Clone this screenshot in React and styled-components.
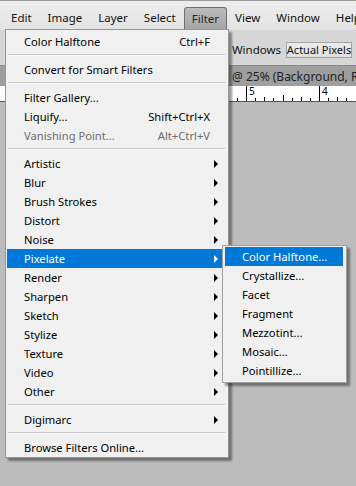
import React from 'react';
import styled, { createGlobalStyle, css } from 'styled-components';

const Global = createGlobalStyle`
  html, body { margin: 0; padding: 0; }
  body {
    width: 356px; height: 486px; overflow: hidden; background: #bcbcbc;
    font-family: "Segoe UI", "Noto Sans", sans-serif;
  }
`;

const Screen = styled.div`
  position: relative;
  width: 356px;
  height: 486px;
  overflow: hidden;
  background: #bcbcbc;
  display: flex;
  flex-direction: column;
  font-family: "Segoe UI", "Noto Sans", sans-serif;
`;

const MenuBar = styled.div`
  height: 30px;
  box-sizing: border-box;
  border-top: 1px solid #9c9c9c;
  background: linear-gradient(#ededed, #e3e3e3);
  display: flex;
  align-items: flex-end;
  padding-left: 3px;
  white-space: nowrap;
  overflow: hidden;
`;

const MenuTitle = styled.div`
  height: 23px;
  box-sizing: border-box;
  padding: 0 8px 2px;
  display: flex;
  align-items: center;
  font-size: 11.5px;
  color: #111;
  white-space: nowrap;
  flex: none;
  ${p => p.$active && css`
    background: linear-gradient(#bdbdbd, #a3a3a3);
    border: 1px solid #6f6f6f;
    border-bottom: none;
    border-radius: 3px 3px 0 0;
    padding: 0 7px 2px;
    color: #2a1f2a;
  `}
`;

const OptionsBar = styled.div`
  height: 35px;
  box-sizing: border-box;
  background: #d6d6d6;
  display: flex;
  align-items: center;
  justify-content: flex-end;
  gap: 5px;
  padding: 4px 4px 0 0;
  font-size: 11.5px;
  color: #111;
`;

const OptionLabel = styled.span`
  white-space: nowrap;
`;

const OptionButton = styled.div`
  height: 16px;
  width: 66px;
  box-sizing: border-box;
  border: 1px solid #a4a4a4;
  background: linear-gradient(#ececec, #e0e0e0);
  display: flex;
  align-items: center;
  justify-content: center;
  white-space: nowrap;
  font-size: 11px;
`;

const DocBand = styled.div`
  height: 21px;
  box-sizing: border-box;
  background: #9e9e9e;
  border-top: 1px solid #8a8a8a;
  display: flex;
  align-items: center;
  font-size: 12px;
  color: #222;
  white-space: nowrap;
  overflow: hidden;
`;

const DocPrefix = styled.span`
  width: 232px;
  flex: none;
  display: flex;
  justify-content: flex-end;
  overflow: hidden;
`;

const Ruler = styled.div`
  height: 15px;
  background: #fff;
  border-bottom: 1px solid #555;
  flex: none;
`;

const Workspace = styled.div`
  flex: 1;
  background: #bcbcbc;
`;

const Menu = styled.div`
  position: absolute;
  left: 5px;
  top: 29px;
  width: 224px;
  box-sizing: border-box;
  background: #f0f0f0;
  border: 1px solid #979797;
  box-shadow: 3px 3px 2px rgba(0, 0, 0, 0.4);
  padding: 2px 0 0;
  z-index: 2;
`;

const SubMenu = styled(Menu)`
  left: 222px;
  top: 245px;
  width: 125px;
  padding: 1px 3px 2px 2px;
  border-color: #a0a0a0;
  z-index: 3;
`;

const Row = styled.div`
  height: 19px;
  margin: 0 5px 0 1px;
  padding-left: 17px;
  display: flex;
  align-items: center;
  font-size: 11.2px;
  line-height: 19px;
  color: ${p => (p.$disabled ? '#6d6d6d' : '#000')};
  white-space: nowrap;
  ${p => p.$active && css`
    background: #0078d7;
    color: #fff;
  `}
`;

const SubRow = styled(Row)`
  margin: 0;
`;

const Label = styled.span`
  flex: 1;
`;

const Shortcut = styled.span``;

const Trail = styled.span`
  width: 13px;
  flex: none;
  display: flex;
  align-items: center;
`;

const Arrow = styled.span`
  margin-left: 4px;
  width: 0;
  height: 0;
  border-left: 4px solid currentColor;
  border-top: 4px solid transparent;
  border-bottom: 4px solid transparent;
`;

const Separator = styled.div`
  height: 9px;
  margin: 0 3px 0 2px;
  display: flex;
  flex-direction: column;
  &::before {
    content: '';
    margin-top: 3px;
    height: 1px;
    background: #c6c6c6;
  }
  &::after {
    content: '';
    height: 1px;
    background: #fafafa;
  }
`;

const menuItems = [
  { label: 'Color Halftone', shortcut: 'Ctrl+F' },
  { sep: true },
  { label: 'Convert for Smart Filters' },
  { sep: true },
  { label: 'Filter Gallery...' },
  { label: 'Liquify...', shortcut: 'Shift+Ctrl+X' },
  { label: 'Vanishing Point...', shortcut: 'Alt+Ctrl+V', disabled: true },
  { sep: true },
  ...['Artistic', 'Blur', 'Brush Strokes', 'Distort', 'Noise', 'Pixelate', 'Render', 'Sharpen', 'Sketch', 'Stylize', 'Texture', 'Video', 'Other'].map(l => ({ label: l, sub: true, active: l === 'Pixelate' })),
  { sep: true },
  { label: 'Digimarc', sub: true },
  { sep: true },
  { label: 'Browse Filters Online...' },
];

const subItems = ['Color Halftone...', 'Crystallize...', 'Facet', 'Fragment', 'Mezzotint...', 'Mosaic...', 'Pointillize...'];

const titles = ['Edit', 'Image', 'Layer', 'Select', 'Filter', 'View', 'Window', 'Help'];

function RulerTicks() {
  const ticks = [];
  const step = 73 / 8;
  for (let i = -27; i <= 12; i++) {
    const x = 246 + i * step;
    if (x < 0 || x > 356) continue;
    const m = ((i % 8) + 8) % 8;
    let h = 3;
    if (m === 0) h = 15;
    else if (m === 4) h = 6;
    else if (m % 2 === 0) h = 4;
    ticks.push(<line key={i} x1={Math.round(x) + 0.5} x2={Math.round(x) + 0.5} y1={15 - h} y2={15} stroke="#000" strokeWidth="1" />);
  }
  return (
    <svg width="356" height="15" style={{ display: 'block' }}>
      {ticks}
      <text x="249" y="9" fontSize="10" fontFamily="Noto Sans, sans-serif" fill="#000">5</text>
      <text x="322" y="9" fontSize="10" fontFamily="Noto Sans, sans-serif" fill="#000">4</text>
      <text x="176" y="9" fontSize="10" fontFamily="Noto Sans, sans-serif" fill="#000">6</text>
    </svg>
  );
}

export default function App() {
  return (
    <Screen>
      <Global />
      <MenuBar>
        {titles.map(t => (
          <MenuTitle key={t} $active={t === 'Filter'}>{t}</MenuTitle>
        ))}
      </MenuBar>
      <OptionsBar>
        <OptionLabel>Zoom All Windows</OptionLabel>
        <OptionButton>Actual Pixels</OptionButton>
      </OptionsBar>
      <DocBand>
        <DocPrefix>Untitled-1&nbsp;</DocPrefix>
        <span>@ 25% (Background, RGB/8)</span>
      </DocBand>
      <Ruler>
        <RulerTicks />
      </Ruler>
      <Workspace />

      <Menu>
        {menuItems.map((it, i) =>
          it.sep ? (
            <Separator key={i} />
          ) : (
            <Row key={i} $active={it.active} $disabled={it.disabled}>
              <Label>{it.label}</Label>
              {it.shortcut && <Shortcut>{it.shortcut}</Shortcut>}
              <Trail>{it.sub && <Arrow />}</Trail>
            </Row>
          )
        )}
      </Menu>

      <SubMenu>
        {subItems.map((s, i) => (
          <SubRow key={s} $active={i === 0}>
            <Label>{s}</Label>
          </SubRow>
        ))}
      </SubMenu>
    </Screen>
  );
}
